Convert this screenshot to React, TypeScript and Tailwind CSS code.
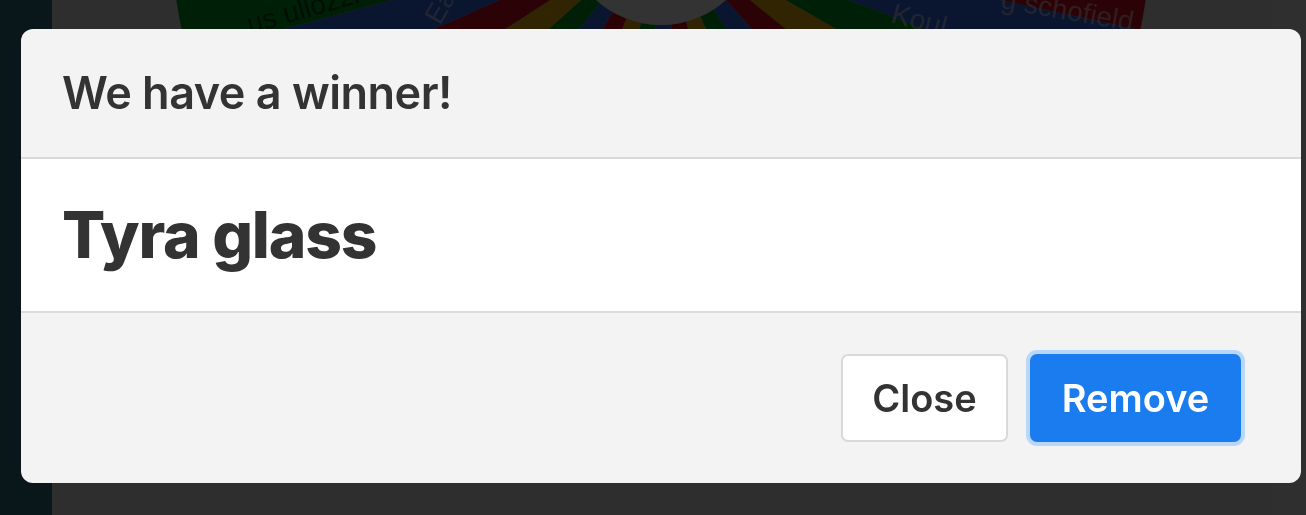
import React from "react";

const COLORS = ["#d50f25", "#3369e8", "#009925", "#eeb211"];

function Wheel() {
  const cx = 661;
  const cy = -72;
  const r = 490;
  const n = 40;
  const wedges = [];
  for (let i = 0; i < n; i++) {
    const a0 = ((i / n) * 360 + 3) * (Math.PI / 180);
    const a1 = (((i + 1) / n) * 360 + 3) * (Math.PI / 180);
    const x0 = cx + r * Math.cos(a0);
    const y0 = cy + r * Math.sin(a0);
    const x1 = cx + r * Math.cos(a1);
    const y1 = cy + r * Math.sin(a1);
    wedges.push(
      <path
        key={i}
        d={`M${cx},${cy} L${x0},${y0} A${r},${r} 0 0 1 ${x1},${y1} Z`}
        fill={COLORS[i % 4]}
      />
    );
  }
  return (
    <svg width="1306" height="40" viewBox="0 0 1306 40" className="block">
      {wedges}
      <circle cx={cx} cy={cy} r={97} fill="#ffffff" />
      <g opacity="0.55" fontFamily="Liberation Sans, sans-serif" fontSize="28">
        <text x="250" y="34" fill="#000" transform="rotate(-16 250 34)">us ullozzi</text>
        <text x="440" y="26" fill="#fff" transform="rotate(-60 440 26)">Eald</text>
        <text x="890" y="22" fill="#fff" transform="rotate(15 890 22)">Koul</text>
        <text x="1000" y="8" fill="#fff" transform="rotate(10 1000 8)">g schofield</text>
      </g>
    </svg>
  );
}

export default function App() {
  return (
    <div className="relative h-[515px] w-[1306px] overflow-hidden bg-[#ececec]" style={{ fontFamily: "Inter, 'Noto Sans', sans-serif" }}>
      <div className="flex h-full">
        <div className="w-[52px] shrink-0 bg-[#2f6f80]" />
        <div className="min-w-0 flex-1 overflow-hidden bg-[#e6e6e6]">
          <div className="-ml-[52px]">
            <Wheel />
          </div>
        </div>
        <div className="w-[36px] shrink-0 border-l border-[#dcdcdc] bg-[#e8e8e8]" />
      </div>
      <div className="absolute inset-0 bg-[rgba(0,0,0,0.8)]" />
      <div className="absolute left-[21px] top-[29px] flex h-[454px] w-[1280px] flex-col overflow-hidden rounded-[12px] bg-[#f3f3f3] text-[#333333]">
        <div className="flex h-[130px] shrink-0 items-center border-b-2 border-[#d9d9d9] px-[41px]">
          <h2 className="text-[45px] font-semibold tracking-[-0.5px]">We have a winner!</h2>
        </div>
        <div className="flex h-[154px] shrink-0 items-center border-b-2 border-[#dcdcdc] bg-white px-[41px]">
          <div className="text-[64px] font-extrabold tracking-[-1.2px]">Tyra glass</div>
        </div>
        <div className="flex flex-1 items-start justify-end gap-[22px] px-[60px] pt-[41px]">
          <button className="h-[88px] w-[167px] rounded-[7px] border-2 border-[#d9d9d9] bg-white text-[38px] font-semibold text-[#333]">
            Close
          </button>
          <button className="h-[88px] w-[211px] rounded-[7px] bg-[#1b7cef] text-[38px] font-semibold text-white ring-[4px] ring-[#b9d6fb]">
            Remove
          </button>
        </div>
      </div>
    </div>
  );
}
